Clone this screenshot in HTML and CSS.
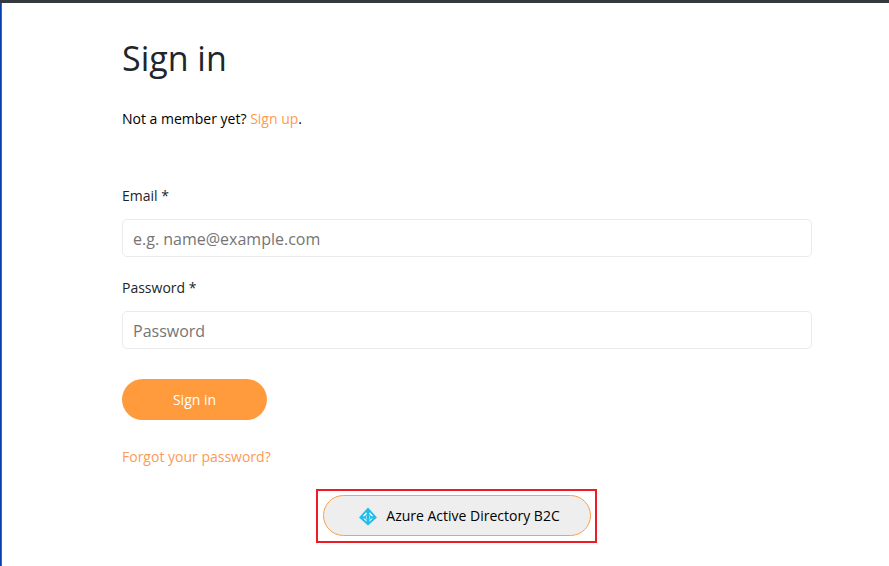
FILE: index.html
```html
<!DOCTYPE html>
<html lang="en">
<head>
<meta charset="utf-8">
<meta name="viewport" content="width=device-width, initial-scale=1">
<title>Sign in</title>
<link rel="stylesheet" href="styles.css">
</head>
<body>
<main class="page">
  <h1 class="title">Sign in</h1>
  <p class="intro">Not a member yet? <a class="link" href="#">Sign up</a>.</p>
  <form class="form">
    <div class="field">
      <label class="label" for="email">Email *</label>
      <input class="input" id="email" type="email" placeholder="e.g. name@example.com">
    </div>
    <div class="field">
      <label class="label" for="password">Password *</label>
      <input class="input" id="password" type="password" placeholder="Password">
    </div>
    <button class="button primary" type="submit">Sign in</button>
  </form>
  <a class="link forgot" href="#">Forgot your password?</a>
  <div class="providers">
    <div class="highlight">
      <button class="button provider" type="button">
        <svg class="icon" viewBox="0 0 18 20" aria-hidden="true">
          <path fill="#1fbcec" d="M9 1.500 18 11.500 9 19.500 0 11.500z"/>
          <path fill="#f4f8fa" d="M7.200 6.200 8 7.500 6.500 9.500 4.200 10.500 3.800 10zM10.800 6.200 10 7.500 11.500 9.500 13.800 10.500 14.200 10zM4.200 12.500 6 12.500 7.600 14.500 7.600 15.800zM13.800 12.500 12 12.500 10.400 14.500 10.400 15.800z"/>
          <path fill="none" stroke="#8edcf4" stroke-width="1" d="M7.500 9.500v4M10.500 9.500v4"/>
        </svg>
        Azure Active Directory B2C
      </button>
    </div>
  </div>
</main>
</body>
</html>
```
FILE: styles.css
```css
* {
  box-sizing: border-box;
}

html {
  background: #ffffff;
}

body {
  margin: 0;
  min-height: 100vh;
  border-top: 3px solid #343a40;
  background: linear-gradient(90deg, #0a3fae 1px, #4a5f9c 1px, #4a5f9c 2px, #ffffff 2px);
  color: #000000;
  font-family: "Open Sans", "Noto Sans", sans-serif;
  font-size: 14px;
  line-height: 20px;
}

.page {
  padding: 31px 77px 20px 122px;
}

.title {
  margin: 0 0 27px;
  color: #212529;
  font-size: 34px;
  font-weight: 400;
  line-height: 48px;
}

.intro {
  margin: 0 0 57px;
}

.link {
  color: #fd9a55;
  text-decoration: none;
}

.field {
  display: flex;
  flex-direction: column;
  gap: 13px;
  margin-bottom: 21px;
}

.label {
  color: #212529;
}

.input {
  width: 100%;
  height: 38px;
  padding: 2px 10px 0;
  border: 1px solid #ebebeb;
  border-radius: 5px;
  background: #ffffff;
  color: #212529;
  font: inherit;
  font-size: 16px;
}

.input::placeholder {
  color: #757575;
}

.button {
  display: flex;
  align-items: center;
  justify-content: center;
  height: 41px;
  border-radius: 21px;
  font: inherit;
  cursor: pointer;
}

.primary {
  width: 145px;
  margin: 30px 0 27px;
  border: 0;
  background: #ff9b3c;
  color: #ffffff;
}

.forgot {
  display: block;
}

.providers {
  display: flex;
  justify-content: center;
  padding-right: 21px;
  margin-top: 22px;
}

.highlight {
  padding: 4px 4px 5px 5px;
  border: 2px solid #ed1c24;
}

.provider {
  gap: 9px;
  padding: 0 30px 0 35px;
  border: 1px solid #f9a04b;
  background: #eeeeee;
  color: #000000;
}

.icon {
  width: 18px;
  height: 20px;
}
```
